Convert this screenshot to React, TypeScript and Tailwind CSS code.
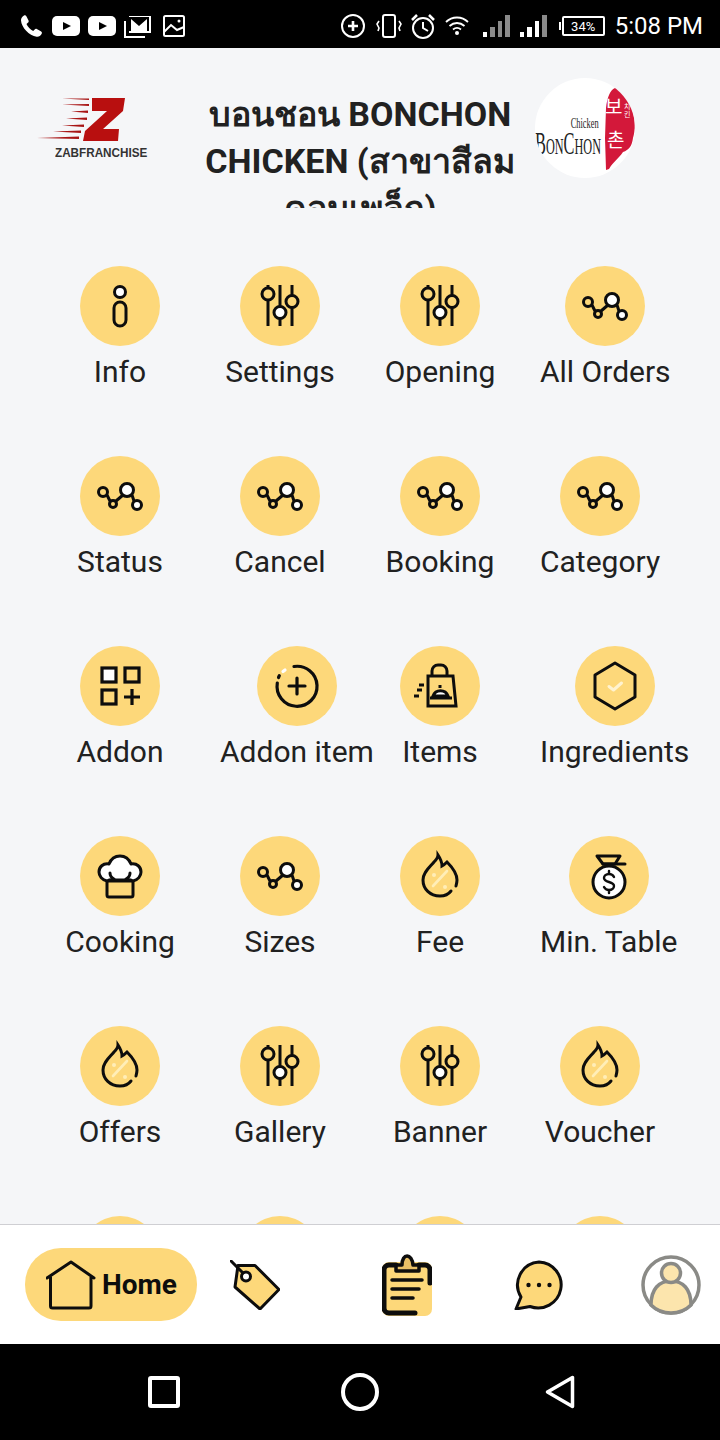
import type { ReactNode } from "react";

const ink = "#0d0d0d";
const yellow = "#fdd87a";

function Sliders() {
  return (
    <g fill="none" stroke={ink} strokeWidth="3">
      <path d="M28 19v3M28 34v26M40 19v21M40 53v7M52 19v10M52 42v18" />
      <circle cx="28" cy="28" r="6" />
      <circle cx="40" cy="46.500" r="6" fill="#fff" />
      <circle cx="52" cy="35.500" r="6" />
    </g>
  );
}

function Graph() {
  return (
    <g fill="none" stroke={ink} strokeWidth="3">
      <path d="M27 39l3 6M36 45l7-6M52 39l2 6" />
      <circle cx="23" cy="36" r="4.500" />
      <circle cx="33" cy="48" r="3.500" />
      <circle cx="47" cy="34" r="6.500" fill="#fff" />
      <circle cx="57" cy="49" r="4.500" fill="#fff" />
    </g>
  );
}

function Info() {
  return (
    <g fill="none" stroke={ink} strokeWidth="3">
      <circle cx="40" cy="26" r="5.500" fill="#fff" />
      <rect x="34" y="36" width="12" height="24" rx="6" />
    </g>
  );
}

function AddonGrid() {
  return (
    <g fill="none" stroke={ink} strokeWidth="3.200">
      <rect x="22" y="22" width="14" height="14" fill="#fff" />
      <rect x="45" y="22" width="14" height="14" />
      <rect x="22" y="44" width="14" height="14" />
      <path d="M52 43v16M44 51h16" />
    </g>
  );
}

function AddonItem() {
  return (
    <g fill="none" stroke={ink} strokeWidth="3.200" strokeLinecap="round">
      <path d="M37 20.500A20 20 0 1 1 20.300 37" />
      <path d="M21.500 31.500l.8-1.800" />
      <path d="M26 25.500l2-1.600" stroke="#fff" />
      <path d="M40 32v16M32 40h16" />
    </g>
  );
}

function Bag() {
  return (
    <g fill="none" stroke={ink} strokeWidth="3">
      <path d="M28 30h25l3 30H28z" />
      <path d="M32 30v-5a6 6 0 0 1 6-6h3a6 6 0 0 1 6 6v5" />
      <path d="M33 50a8 8 0 0 1 15 0z" fill="#fff" />
      <path d="M30 52h22M40 39v3" />
      <path d="M19 39h5M17 44h5M14 50h5" />
    </g>
  );
}

function Hexagon() {
  return (
    <g fill="none" strokeLinejoin="round" strokeLinecap="round">
      <path d="M40 17l20 12v22L40 63 20 51V29z" stroke={ink} strokeWidth="3" />
      <path d="M34 40.500l4.500 3.500 8-7" stroke="#fff3d0" strokeWidth="3" />
    </g>
  );
}

function Chef() {
  return (
    <g fill="none" stroke={ink} strokeWidth="3" strokeLinecap="round" strokeLinejoin="round">
      <path d="M27 45h26v14a2 2 0 0 1-2 2H29a2 2 0 0 1-2-2z" />
      <path
        d="M27 45c-5-1-8-5-8-9 0-5 4-9 10-8 2-5 6-8 11-8s9 3 11 8c6-1 10 3 10 8 0 4-3 8-8 9-1 0-3-2-4-1H31c-1-1-3 1-4 1z"
        fill="#fff"
      />
      <path d="M30 37c0 3 2 5 4 6M50 37c0 3-2 5-4 6" />
    </g>
  );
}

function Flame() {
  return (
    <g fill="none" strokeLinecap="round">
      <path
        d="M51 55c-3 4-7 5-11 5-10 0-17-7-17-16 0-8 7-13 11-18 2-2 4-5 4-7 2 3 4 7 4 11 2-1 4-3 5-4 5 5 10 11 10 18 0 2-.5 4-1 6"
        stroke={ink}
        strokeWidth="3"
      />
      <path d="M33 50l14-15" stroke="#ffeeb8" strokeWidth="2.600" />
      <circle cx="34" cy="39" r="2" fill="#ffeeb8" />
      <circle cx="45" cy="51" r="2" fill="#ffeeb8" />
    </g>
  );
}

function MoneyBag() {
  return (
    <g fill="none" stroke={ink} strokeWidth="3" strokeLinecap="round" strokeLinejoin="round">
      <path d="M28 20h23l-5 8H34z" />
      <path d="M34 28h22" />
      <circle cx="40" cy="46" r="16" fill="#fff" />
      <path d="M45 41c-1-2-3-3-5-3-3 0-5 2-5 4 0 5 10 3 10 8 0 2-2 4-5 4-2 0-4-1-5-3M40 35v3M40 54v3" strokeWidth="2.400" />
    </g>
  );
}

const items: { label: string; icon: ReactNode }[] = [
  { label: "Info", icon: <Info /> },
  { label: "Settings", icon: <Sliders /> },
  { label: "Opening", icon: <Sliders /> },
  { label: "All Orders", icon: <Graph /> },
  { label: "Status", icon: <Graph /> },
  { label: "Cancel", icon: <Graph /> },
  { label: "Booking", icon: <Graph /> },
  { label: "Category", icon: <Graph /> },
  { label: "Addon", icon: <AddonGrid /> },
  { label: "Addon item", icon: <AddonItem /> },
  { label: "Items", icon: <Bag /> },
  { label: "Ingredients", icon: <Hexagon /> },
  { label: "Cooking", icon: <Chef /> },
  { label: "Sizes", icon: <Graph /> },
  { label: "Fee", icon: <Flame /> },
  { label: "Min. Table", icon: <MoneyBag /> },
  { label: "Offers", icon: <Flame /> },
  { label: "Gallery", icon: <Sliders /> },
  { label: "Banner", icon: <Sliders /> },
  { label: "Voucher", icon: <Flame /> },
  { label: "", icon: null },
  { label: "", icon: null },
  { label: "", icon: null },
  { label: "", icon: null },
];

function StatusBar() {
  return (
    <div className="flex h-12 shrink-0 items-center justify-between bg-black pl-[19px] pr-[17px] pt-1 text-white">
      <div className="flex items-center">
        <svg viewBox="0 0 24 24" className="size-6 fill-white">
          <path d="M5 1.500c1-.5 2 0 2.500 1l2 4c.4.8.2 1.500-.4 2.100L7.500 10c1 2.500 4 5.700 6.700 7l1.500-1.600c.6-.6 1.400-.7 2.100-.3l4 2.100c1 .5 1.400 1.500.9 2.500-1 2-3 3.300-5 3C10 21.500 2.500 13.500 2 6.500 1.900 4.500 3 2.500 5 1.500z" />
        </svg>
        <svg viewBox="0 0 28 20" className="ml-[9px] h-5 w-7">
          <rect width="28" height="20" rx="5" fill="#fff" />
          <path d="M11 6l8 4-8 4z" fill="#000" />
        </svg>
        <svg viewBox="0 0 28 20" className="ml-2 h-5 w-7">
          <rect width="28" height="20" rx="5" fill="#fff" />
          <path d="M11 6l8 4-8 4z" fill="#000" />
        </svg>
        <svg viewBox="0 0 28 24" className="ml-2 h-6 w-7" fill="none" stroke="#fff" strokeWidth="2">
          <path d="M1 7v16h20" />
          <rect x="5" y="2" width="22" height="17" fill="#fff" stroke="none" />
          <path d="M7 17V5l8 7 8-7v12h2V3H5v14z" fill="#000" stroke="none" />
        </svg>
        <svg viewBox="0 0 22 22" className="ml-[11px] size-[22px]" fill="none" stroke="#fff" strokeWidth="2">
          <rect x="1" y="1" width="20" height="20" rx="1.500" />
          <path d="M1 17l7-7 6 5 7-3" />
          <circle cx="16" cy="6" r="1.500" fill="#fff" stroke="none" />
        </svg>
      </div>
      <div className="flex items-center">
        <svg viewBox="0 0 24 24" className="size-6" fill="none" stroke="#fff" strokeWidth="2">
          <circle cx="12" cy="12" r="11" />
          <path d="M12 7v10M7 12h10" strokeWidth="2.600" />
        </svg>
        <svg viewBox="0 0 26 24" className="ml-[11px] h-6 w-[26px]" fill="none" stroke="#fff" strokeWidth="2">
          <rect x="7" y="1" width="12" height="22" rx="2" />
          <path d="M3 7L1 10l2 4-1 3M23 7l2 3-2 4 1 3" strokeWidth="1.600" />
        </svg>
        <svg viewBox="0 0 26 26" className="ml-2 size-[26px]" fill="none" stroke="#fff" strokeWidth="2">
          <circle cx="13" cy="15" r="10" />
          <path d="M13 9v6l5 3" />
          <path d="M2 7l5-5M24 7l-5-5" strokeWidth="2.500" />
        </svg>
        <svg viewBox="0 0 24 20" className="ml-[9px] h-5 w-6" fill="none" stroke="#fff" strokeWidth="1.800">
          <path d="M1 6c6-6 16-6 22 0M4.500 10c4.500-4 10.500-4 15 0M8 13.500c2.500-2 5.500-2 8 0" />
          <circle cx="12" cy="17" r="2" fill="#fff" stroke="none" />
        </svg>
        <div className="ml-[14px] flex items-end gap-[3px]">
          <span className="h-[5px] w-[4.500px] bg-white" />
          <span className="h-[10px] w-[4.500px] bg-[#8a8a8a]" />
          <span className="h-4 w-[4.500px] bg-[#8a8a8a]" />
          <span className="h-[22px] w-[4.500px] bg-[#8a8a8a]" />
        </div>
        <div className="ml-[10px] flex items-end gap-[3px]">
          <span className="h-[5px] w-[4.500px] bg-white" />
          <span className="h-[10px] w-[4.500px] bg-white" />
          <span className="h-4 w-[4.500px] bg-white" />
          <span className="h-[22px] w-[4.500px] bg-[#8a8a8a]" />
        </div>
        <div className="ml-[12px] flex items-center">
          <span className="h-2 w-[2px] bg-white" />
          <span className="ml-[1px] flex h-5 w-[43px] items-center justify-center rounded-[2px] border-2 border-white text-[13px] leading-none">
            34%
          </span>
        </div>
        <span className="ml-[10px] text-[24px] leading-none">5:08 PM</span>
      </div>
    </div>
  );
}

function ZabLogo() {
  return (
    <div className="flex w-[113px] flex-col items-start">
      <svg viewBox="0 0 91 45" className="h-[45px] w-[91px]">
        <path d="M57 1h33l-2 13-20 18h16l-1 12H48l2-10 22-20H57z" fill="#b80f0f" />
        <path
          d="M27 1.500l27 0 0 1.500zM27 7.500l27-.5 0 2zM36 14.500l17-1 0 2.500zM31 21.500l21-1 0 2.500zM27 28.500l22-1 0 2.500zM18 34.500l28-1 0 2.500zM2 41l42-1.500 0 2.500z"
          fill="#a81414"
        />
      </svg>
      <span className="ml-[20px] mt-[4px] origin-left scale-x-[0.9] whitespace-nowrap font-['Liberation_Sans',sans-serif] text-[13px] font-bold leading-[13px] text-[#333]">
        ZABFRANCHISE
      </span>
    </div>
  );
}

function BonchonLogo() {
  return (
    <div className="relative ml-[10px] mt-[30px] size-[100px] shrink-0 overflow-hidden rounded-full bg-white">
      <svg viewBox="0 0 100 100" className="absolute inset-0 size-full">
        <path d="M80 10C75 12 72 20 71 30L70 60L71 92L74 91C78 84 84 80 88 74C94 72 97 68 98 60C101 50 100 38 96 28C92 18 86 10 80 10z" fill="#d3183a" />
      </svg>
      <span className="absolute left-0 top-[51px] origin-left scale-x-[0.51] whitespace-nowrap font-['Liberation_Serif',serif] text-[24px] leading-[28px] text-[#222]">
        <span className="text-[32px]">B</span>ON<span className="text-[32px]">C</span>HON
      </span>
      <span className="absolute right-[36px] top-[40px] origin-right scale-x-[0.6] whitespace-nowrap font-['Liberation_Serif',serif] text-[14px] leading-[11px] text-[#222]">
        Chicken
      </span>
      <span className="absolute left-[70px] top-[16px] font-['Noto_Sans_CJK_KR',sans-serif] text-[19px] leading-[24px] text-white">
        보
      </span>
      <span className="absolute left-[72px] top-[48px] font-['Noto_Sans_CJK_KR',sans-serif] text-[19px] leading-[26px] text-white">
        촌
      </span>
      <span className="absolute left-[89px] top-[24px] w-[9px] font-['Noto_Sans_CJK_KR',sans-serif] text-[7px] leading-[8px] text-white">
        치킨
      </span>
    </div>
  );
}

function Header() {
  return (
    <div className="flex h-40 shrink-0 items-start overflow-hidden pl-[35px]">
      <div className="mt-[49px]">
        <ZabLogo />
      </div>
      <h1 className="ml-[47px] mt-[43px] h-[117px] w-[330px] shrink-0 overflow-hidden text-center text-[34px] font-bold leading-[47px] text-[#212121]">
        บอนชอน BONCHON CHICKEN (สาขาสีลม คอมเพล็ก)
      </h1>
      <BonchonLogo />
    </div>
  );
}

function MenuItem({ label, icon }: { label: string; icon: ReactNode }) {
  return (
    <div className="flex h-[190px] w-fit min-w-[120px] flex-col items-center">
      <div className="size-20 shrink-0 rounded-full bg-[#fdd87a]">
        <svg viewBox="0 0 80 80" className="size-20">
          {icon}
        </svg>
      </div>
      <span className="mt-[9px] whitespace-nowrap text-[30px] leading-[34px] text-[#212121]">{label}</span>
    </div>
  );
}

function BottomNav() {
  return (
    <div className="flex h-[120px] shrink-0 items-center border-t border-[#cfcfd3] bg-white pl-[25px]">
      <div className="flex h-[73px] w-[172px] items-center rounded-[36px] bg-[#fdd87a] pl-[21px]">
        <svg viewBox="0 0 50 50" className="size-[50px]" fill="none" stroke={ink} strokeWidth="3" strokeLinejoin="round" strokeLinecap="round">
          <path d="M1 18L25 2l23 16M4.500 17v29a2 2 0 0 0 2 2H43a2 2 0 0 0 2-2V17" />
        </svg>
        <span className="ml-[6px] text-[28px] font-bold leading-none text-[#0d0d0d]">Home</span>
      </div>
      <svg viewBox="0 0 50 50" className="ml-[33px] size-[50px]" fill={yellow} stroke={ink} strokeWidth="3" strokeLinejoin="round" strokeLinecap="round">
        <path d="M8 5.500h17L49 29.500 30 49 5 27z" />
        <circle cx="16" cy="16.500" r="4.500" fill="#fff" />
        <path d="M1 1l12 12" fill="none" />
      </svg>
      <svg viewBox="0 0 50 62" className="ml-[102px] h-[62px] w-[50px]" fill="none" strokeLinecap="round">
        <rect x="0" y="8" width="50" height="54" rx="7" fill={yellow} />
        <path d="M33 59H7a5 5 0 0 1-5-5V16a5 5 0 0 1 5-5h7M37 11h6a5 5 0 0 1 5 5v13" stroke={ink} strokeWidth="5" />
        <path d="M14 17V11h6c0-12 10-12 11 0h6v6z" fill="#e8bf66" stroke={ink} strokeWidth="3.500" strokeLinejoin="round" />
        <path d="M10 26h30M10 35h27M10 44h21" stroke={ink} strokeWidth="3.500" />
      </svg>
      <svg viewBox="0 0 50 50" className="ml-[82px] size-[50px]" fill={yellow} stroke={ink} strokeWidth="3" strokeLinejoin="round">
        <path d="M25 2a23 23 0 1 1-9 44.500L2 49l5-12A23 23 0 0 1 25 2z" />
        <circle cx="14.500" cy="25" r="2.200" fill={ink} stroke="none" />
        <circle cx="25" cy="25" r="2.200" fill={ink} stroke="none" />
        <circle cx="35.500" cy="25" r="2.200" fill={ink} stroke="none" />
      </svg>
      <svg viewBox="0 0 60 60" className="ml-[77px] size-[60px]" fill="#fce5ad" stroke="#8a8a86" strokeWidth="3.500">
        <circle cx="30" cy="30" r="28" fill="#fff" />
        <path d="M10 50c0-16 8-24 20-24s20 8 20 24c-5 5-12 8-20 8s-15-3-20-8z" />
        <circle cx="30" cy="18" r="9.500" />
      </svg>
    </div>
  );
}

function AndroidNav() {
  return (
    <div className="flex h-24 shrink-0 items-center bg-black pl-[147px]">
      <svg viewBox="0 0 34 34" className="size-[34px]" fill="none" stroke="#fff" strokeWidth="4" strokeLinejoin="round">
        <rect x="3" y="3" width="28" height="28" rx="1" />
      </svg>
      <svg viewBox="0 0 38 38" className="ml-[160px] size-[38px]" fill="none" stroke="#fff" strokeWidth="4">
        <circle cx="19" cy="19" r="17" />
      </svg>
      <svg viewBox="0 0 30 34" className="ml-[166px] h-[34px] w-[30px]" fill="none" stroke="#fff" strokeWidth="3.500" strokeLinejoin="round">
        <path d="M27.500 2.500v29L2.500 17z" />
      </svg>
    </div>
  );
}

export default function App() {
  return (
    <div className="flex h-[1440px] w-[720px] flex-col overflow-hidden bg-[#f5f6f8] font-['Roboto',sans-serif]">
      <StatusBar />
      <div className="flex min-h-0 flex-1 flex-col overflow-hidden">
        <Header />
        <div className="grid grid-cols-[120px_120px_120px_120px] gap-x-10 pl-[60px] pt-[58px]">
          {items.map((item, i) => (
            <MenuItem key={i} label={item.label} icon={item.icon} />
          ))}
        </div>
      </div>
      <BottomNav />
      <AndroidNav />
    </div>
  );
}
